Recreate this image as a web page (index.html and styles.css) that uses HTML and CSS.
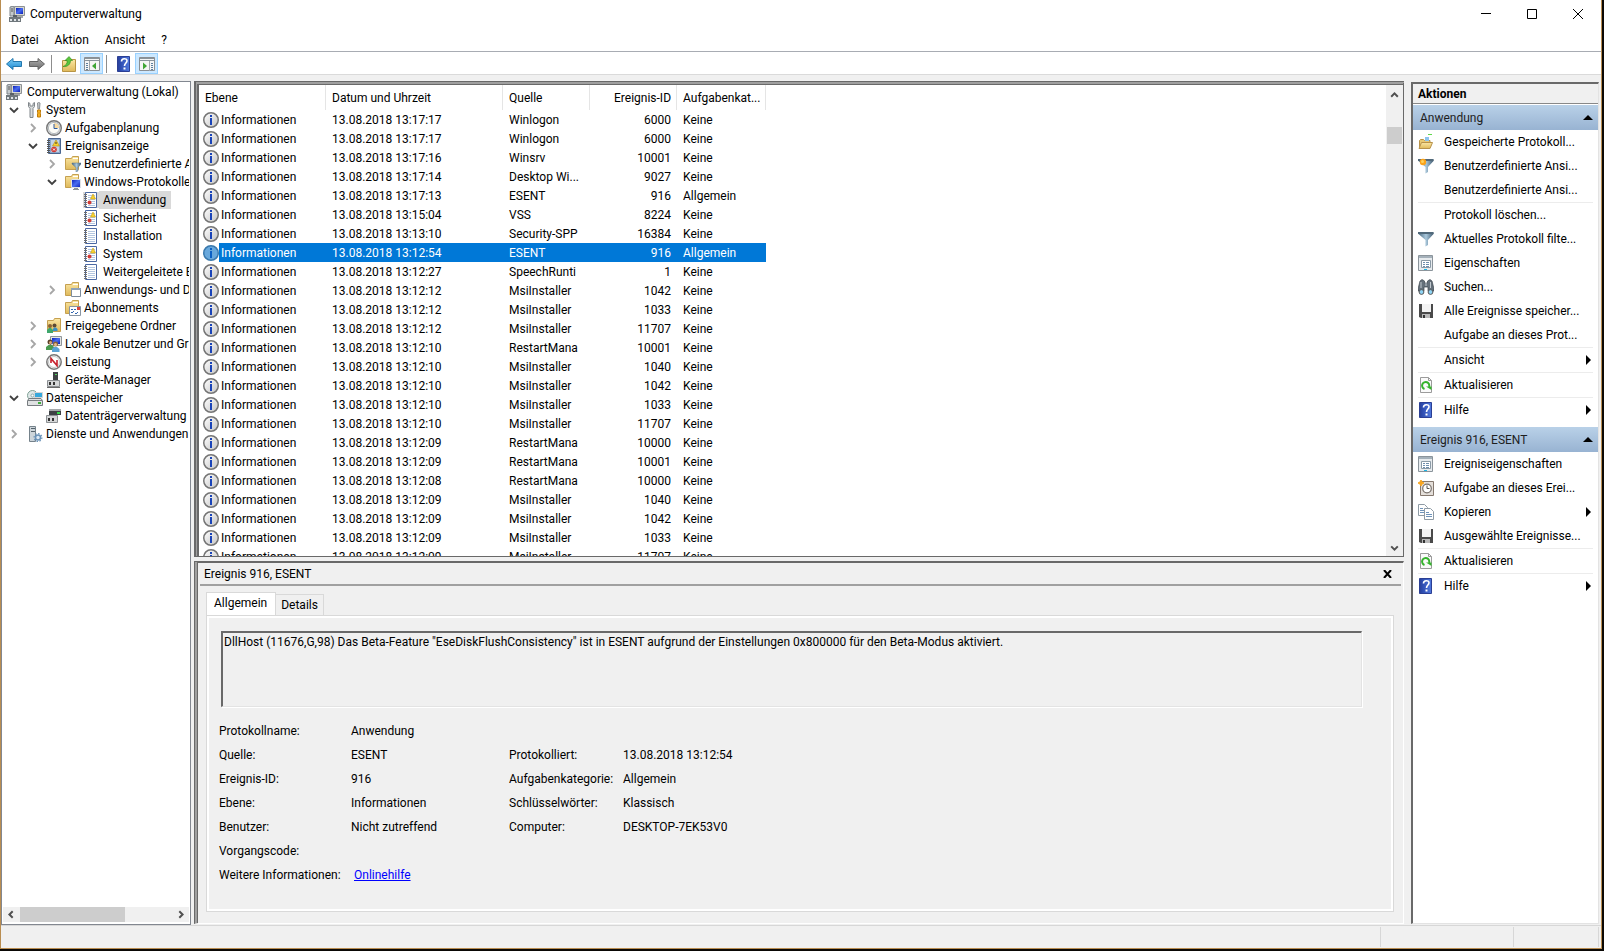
FILE: index.html
```html
<!DOCTYPE html>
<html lang="de">
	<head>
		<title>Computerverwaltung</title>
		<meta charset="UTF-8" />
		<link rel="stylesheet" href="styles.css">
	</head>
	<body>
		<!-- Icon set -->
		<svg class="icon-defs" width="0" height="0">
			<defs>
				<linearGradient id="gBlue" x1="0" y1="0" x2="0" y2="1"><stop offset="0" stop-color="#7fd0f7"/><stop offset="1" stop-color="#1a86d0"/></linearGradient>
				<linearGradient id="gGrey" x1="0" y1="0" x2="0" y2="1"><stop offset="0" stop-color="#b0b0b0"/><stop offset="1" stop-color="#6c6c6c"/></linearGradient>
				<linearGradient id="gFolder" x1="0" y1="0" x2="0" y2="1"><stop offset="0" stop-color="#fbe7a4"/><stop offset="1" stop-color="#dfb95a"/></linearGradient>
				<linearGradient id="gScreen" x1="0" y1="0" x2="1" y2="1"><stop offset="0" stop-color="#0a1fb8"/><stop offset="0.5" stop-color="#4a6df0"/><stop offset="1" stop-color="#0a1fb8"/></linearGradient>
				<linearGradient id="gHelp" x1="0" y1="0" x2="1" y2="0"><stop offset="0" stop-color="#2b3f94"/><stop offset="0.2" stop-color="#2b49ad"/><stop offset="1" stop-color="#5179de"/></linearGradient>
				<linearGradient id="gInfo" x1="0" y1="0" x2="1" y2="1"><stop offset="0" stop-color="#ffffff"/><stop offset="1" stop-color="#c4c4c4"/></linearGradient>
				<linearGradient id="gFunnel" x1="0" y1="0" x2="1" y2="0"><stop offset="0" stop-color="#4c6a80"/><stop offset="0.5" stop-color="#a9c8dc"/><stop offset="1" stop-color="#3f5a70"/></linearGradient>
				<symbol id="computer" viewBox="0 0 16 16">
					<path d="M1 1l4-1v10H1z" fill="#c5cacd" stroke="#7b8288"/>
					<path d="M2 3h2M2 5h2" stroke="#555"/>
					<path d="M5.500.5h10v9h-10z" fill="#d8d8d2" stroke="#8d9194"/>
					<path d="M7 2h7v6H7z" fill="url(#gScreen)"/>
					<path d="M7 10h7v2H7z" fill="#a4a7a9"/>
					<path d="M4 9h4v2H4z" fill="#596066"/>
					<path d="M0 11h12v5H0z" fill="#6f777c"/>
					<path d="M1 13h2v2H1zM5 13h2v2H5zM9 13h2v2H9z" fill="#dfe3e6"/>
				</symbol>
				<symbol id="back" viewBox="0 0 16 16"><path d="M.5 8L7 2.500V5.500h8.500v5H7v3z" fill="url(#gBlue)" stroke="#2277ad"/></symbol>
				<symbol id="forward" viewBox="0 0 16 16"><path d="M15.500 8L9 2.500V5.500H.5v5H9v3z" fill="url(#gGrey)" stroke="#646464"/></symbol>
				<symbol id="folderup" viewBox="0 0 16 16">
					<path d="M1.500 4.500h6l1-1h6v12h-13z" fill="url(#gFolder)" stroke="#b99545"/>
					<path d="M2 10.500c3-1 4.500-3 4-6H4L8 .5l3.500 4H9.500c0 4-3 6.500-7.500 6z" fill="#5ac53c" stroke="#2e8a1c" stroke-width=".6"/>
				</symbol>
				<symbol id="paneleft" viewBox="0 0 16 16">
					<path d="M.5 1.500h15v13H.5z" fill="#f5f5f5" stroke="#8a8f94"/>
					<path d="M1 2h14v1H1zM1 4h14v1H1z" fill="#8a949c"/>
					<path d="M5.500 5v10" stroke="#a0a5aa"/>
					<path d="M2 7.500h2M2 9.500h2M2 11.500h2M2 13.500h2" stroke="#5d7f9e"/>
					<path d="M12 6.500v7L8 10z" fill="#3fa535"/>
				</symbol>
				<symbol id="paneright" viewBox="0 0 16 16">
					<path d="M.5 1.500h15v13H.5z" fill="#f5f5f5" stroke="#8a8f94"/>
					<path d="M1 2h14v1H1zM1 4h14v1H1z" fill="#8a949c"/>
					<path d="M10.500 5v10" stroke="#a0a5aa"/>
					<path d="M12 7.500h2M12 9.500h2M12 11.500h2M12 13.500h2" stroke="#5d7f9e"/>
					<path d="M4 6.500v7L8 10z" fill="#3fa535"/>
				</symbol>
				<symbol id="help" viewBox="0 0 16 16">
					<path d="M1.500.5h12v15h-12z" fill="url(#gHelp)" stroke="#2b3f94"/>
					<path d="M5.500 5.500c0-3.500 5.500-3.500 5.500-.8C11 7 8.500 7 8.500 10" fill="none" stroke="#fff" stroke-width="1.600"/>
					<path d="M7.500 11.500h2v2h-2z" fill="#fff"/>
				</symbol>
				<symbol id="tools" viewBox="0 0 16 16">
					<path d="M1.500.5v4l1.500 2v9h3v-9l1.500-2v-4L6 1.500V4H3V1.500z" fill="#d9dcdd" stroke="#80868a"/>
					<path d="M10.500 1l1-.5 1.500.5-.5 6h-1.500z" fill="#c9ccce" stroke="#8a8f92"/>
					<path d="M10.500 8h3v2l-.5 1 .5 1v3h-3v-3l.5-1-.5-1z" fill="#f5b021" stroke="#c07c08"/>
				</symbol>
				<symbol id="clock" viewBox="0 0 16 16">
					<circle cx="8" cy="8" r="7.300" fill="#dfe3e6" stroke="#777" stroke-width="1.400"/>
					<circle cx="8" cy="8" r="5.600" fill="#fbfbf6" stroke="#b5babd"/>
					<path d="M8 8V3a5 5 0 0 1 5 5z" fill="#f6d9a0"/>
					<path d="M8 4v4.500h3.500" fill="none" stroke="#2c5aa0"/>
				</symbol>
				<symbol id="eventlog" viewBox="0 0 16 16">
					<path d="M2.500.5h12v15h-12z" fill="#8ba7c9" stroke="#4a6690"/>
					<path d="M5 2h8v12H5z" fill="#c3d3e6"/>
					<path d="M1 2.500h3M1 4.500h3M1 6.500h3M1 8.500h3M1 10.500h3M1 12.500h3M1 14.500h3" stroke="#555"/>
					<path d="M10 2l3.500 6h-7z" fill="#f8d230" stroke="#b08c10" stroke-width=".6"/>
					<path d="M9.500 4h1v2h-1z" fill="#333"/>
					<circle cx="8" cy="11.500" r="2.800" fill="#d23a34"/><path d="M7 10.500l2 2M9 10.500l-2 2" stroke="#fff"/>
				</symbol>
				<symbol id="folder" viewBox="0 0 16 16">
					<path d="M.5 2.500h6l1-2h6v13H.5z" fill="url(#gFolder)" stroke="#c5a050"/>
					<path d="M8 2h5v1H8z" fill="#fff"/>
				</symbol>
				<symbol id="folderfilter" viewBox="0 0 16 16">
					<use href="#folder"/>
					<path d="M7 7h9v1l-3 3.500V15l-2 1v-4.500L7 8z" fill="url(#gFunnel)" stroke="#5c7788" stroke-width=".5"/>
				</symbol>
				<symbol id="folderpc" viewBox="0 0 16 16">
					<use href="#folder"/>
					<path d="M6.500 5.500h9v8h-9z" fill="url(#gScreen)" stroke="#dfe3e6"/>
					<path d="M9 14h4v1h1v1H8v-1h1z" fill="#8d9499"/>
				</symbol>
				<symbol id="folderwin" viewBox="0 0 16 16">
					<use href="#folder"/>
					<path d="M6.500 6.500h9v8h-9z" fill="#fff" stroke="#7d8c9c"/>
					<path d="M6 6h10v2H6z" fill="#8fa3b8"/>
				</symbol>
				<symbol id="folderabo" viewBox="0 0 16 16">
					<use href="#folder"/>
					<path d="M4.500 6.500h11v9h-11z" fill="#fff" stroke="#8895a3"/>
					<path d="M6 12l1 1 2-2M10 13l1 1 2-2M6 9.500h2M9 9.500h2" fill="none" stroke="#3468b0"/>
					<path d="M12 7h3v3h-3z" fill="#d9443c"/>
				</symbol>
				<symbol id="log" viewBox="0 0 16 16">
					<path d="M2.500.5h11v15h-11z" fill="#fff" stroke="#4b68a3"/>
					<path d="M5 3.500h7M5 5.500h7M5 7.500h7M5 9.500h7M5 11.500h7M5 13.500h7" stroke="#b3c6e0"/>
					<path d="M1 2.500h3M1 4.500h3M1 6.500h3M1 8.500h3M1 10.500h3M1 12.500h3M1 14.500h3" stroke="#6e6e6e"/>
				</symbol>
				<symbol id="logwarn" viewBox="0 0 16 16">
					<use href="#log"/>
					<path d="M10 2l2.500 5h-5z" fill="#f8d230" stroke="#c79d12" stroke-width=".6"/>
					<circle cx="6.500" cy="10.500" r="2" fill="#d23a34"/>
				</symbol>
				<symbol id="shared" viewBox="0 0 16 16">
					<path d="M1.500 2.500h6l1-2h6v13h-13z" fill="url(#gFolder)" stroke="#c5a050"/>
					<circle cx="4" cy="8" r="2" fill="#8a6234"/><circle cx="8.500" cy="7.500" r="2" fill="#5c4a35"/>
					<path d="M7 13v-2l1-1.500h2l1.500 1.500v2z" fill="#3c8fc4"/><path d="M1 15v-3l2-2h2l2 2v3z" fill="#3fa76c"/>
				</symbol>
				<symbol id="users" viewBox="0 0 16 16">
					<path d="M4.500.5h11v9h-11z" fill="#e2e4e4" stroke="#8f9598"/><path d="M6 2h8v6H6z" fill="url(#gScreen)"/>
					<circle cx="4" cy="6" r="2.500" fill="#5c4028"/><circle cx="4.500" cy="6.500" r="1.500" fill="#d9a878"/>
					<path d="M0 14v-3l2.500-2H6l2 2v3z" fill="#4a9a50"/>
					<circle cx="9.500" cy="8" r="2.500" fill="#8a6234"/><circle cx="9.500" cy="8.500" r="1.500" fill="#e5bb90"/>
					<path d="M6 16v-3l2-2h3l2.500 2v3z" fill="#5aa3d6"/>
				</symbol>
				<symbol id="perf" viewBox="0 0 16 16">
					<circle cx="8" cy="8" r="7.200" fill="#fff" stroke="#777" stroke-width="1.500"/>
					<circle cx="8" cy="8" r="5.500" fill="#fff" stroke="#c8c8c8"/>
					<path d="M5 9V4.500L11 11.500V6" fill="none" stroke="#c8202c" stroke-width="1.600"/>
				</symbol>
				<symbol id="device" viewBox="0 0 16 16">
					<path d="M7 0h5v8H7z" fill="#3e4143"/><path d="M9 2h2v1H9z" fill="#4fd05a"/>
					<path d="M1.500 8.500h12v6h-12z" fill="#d5d7d8" stroke="#8b8f92"/>
					<path d="M3 10h2v3H3zM7 10h2v3H7z" fill="#333"/><path d="M1 15h13v1H1z" fill="#6a6a6a"/>
				</symbol>
				<symbol id="storage" viewBox="0 0 16 16">
					<circle cx="5.500" cy="5.500" r="5" fill="#dfe8e8" stroke="#7fa095"/><circle cx="5.500" cy="5.500" r="1.500" fill="#fff" stroke="#8aa"/>
					<path d="M7.500 2.500h8v5h-8z" fill="#37a8dc" stroke="#d5d5d5"/>
					<path d="M2 8.500h12l1.500 2v5H.5v-5z" fill="#dfe1e2" stroke="#777c80"/><path d="M1 10.500h14" stroke="#777c80"/><path d="M11 12h3v2h-3z" fill="#3fae3c"/>
				</symbol>
				<symbol id="disk" viewBox="0 0 16 16">
					<path d="M3 1h12v6H3z" fill="#3c4043"/><path d="M3 1h12v2H3z" fill="#a4a8aa"/><path d="M11 4h3v2h-3z" fill="#33d84a"/>
					<path d="M.5 7.500h11v7H.5z" fill="#d5d7d8" stroke="#8b8f92"/><path d="M2 10h2v3H2zM6 10h2v3H6z" fill="#333"/>
				</symbol>
				<symbol id="services" viewBox="0 0 16 16">
					<path d="M2.500.5h6v15h-6z" fill="#cdd5da" stroke="#75828b"/><path d="M4 2.500h4M4 5.500h4" stroke="#55636c"/>
					<circle cx="11" cy="11.500" r="2.500" fill="#dce9f4" stroke="#6b93b8" stroke-width="1.500"/>
					<circle cx="11" cy="11.500" r="3.900" fill="none" stroke="#6b93b8" stroke-width="1.200" stroke-dasharray="1.500 1.500"/>
				</symbol>
				<symbol id="info" viewBox="0 0 16 16">
					<circle cx="8" cy="8" r="7.250" fill="url(#gInfo)" stroke="#757575" stroke-width="1.500"/>
					<path d="M7 3h2v2H7zM7 6h2v7H7z" fill="#1a44b8"/>
				</symbol>
				<symbol id="infosel" viewBox="0 0 16 16">
					<circle cx="8" cy="8" r="7.250" fill="#68a8dc" stroke="#3a79ad" stroke-width="1.500"/>
					<path d="M7 3h2v2H7zM7 6h2v7H7z" fill="#0a5fc4"/>
				</symbol>
				<symbol id="open" viewBox="0 0 16 16">
					<path d="M10 .5h4" stroke="#5fd84c"/>
					<path d="M1.500 13V6.500l1-1h3l1 1H12V8" fill="#e8c873" stroke="#b8924a"/>
					<path d="M7 3h4v4H7z" fill="#8cc4ee"/>
					<path d="M3.500 8.500h11L12 14.500H1z" fill="url(#gFolder)" stroke="#b8924a"/>
				</symbol>
				<symbol id="funnel" viewBox="0 0 16 16">
					<path d="M.5 1.500h15v1.500L10 9v5l-2.500 1.500V9L.5 3z" fill="url(#gFunnel)"/><path d="M0 2h15.500" stroke="#51697a" stroke-width="2"/>
				</symbol>
				<symbol id="funnelnew" viewBox="0 0 16 16">
					<use href="#funnel"/><circle cx="5" cy="4" r="3.200" fill="#fba31a"/><circle cx="4.500" cy="3.500" r="1.500" fill="#ffd25a"/>
				</symbol>
				<symbol id="props" viewBox="0 0 16 16">
					<path d="M.5.5h14v15H.5z" fill="#e7ebee" stroke="#8b949b"/><path d="M1 1h13v2H1z" fill="#a5b1ba"/>
					<path d="M3.500 5.500h9v7h-9z" fill="#fff" stroke="#8b9aa6"/><path d="M5 7.500h2M8 7.500h3M5 9.500h2M8 9.500h3M5 11.500h2M8 11.500h3" stroke="#6f8fae"/>
					<path d="M6 14.500h3" stroke="#19b5e6"/>
				</symbol>
				<symbol id="binoc" viewBox="0 0 16 16">
					<path d="M2 2l2-1.500L6.500 2v2h3V2L12 .5 14 2l2 8v2h-6V8H6v4H0v-2z" fill="#65707a" stroke="#3e464d" stroke-width=".7"/>
					<path d="M3 3v6M12.500 3v6M8 4v3" stroke="#c1c9cf"/>
					<circle cx="3.500" cy="13" r="2.400" fill="#8fd4f4" stroke="#555"/><circle cx="12.500" cy="13" r="2.400" fill="#8fd4f4" stroke="#555"/>
				</symbol>
				<symbol id="save" viewBox="0 0 16 16">
					<path d="M1 1h14v14H3l-2-1z" fill="#4a4a4a"/><path d="M4 1h9v8H4z" fill="#f3f3f3"/>
					<path d="M4 11h8v4H4z" fill="#b9b9b9"/><path d="M5 12h2v3H5z" fill="#333"/>
				</symbol>
				<symbol id="refresh" viewBox="0 0 16 16">
					<path d="M2.500.5h8l3 3v12h-11z" fill="#fafafa" stroke="#9b9b9b"/><path d="M10.500.5v3h3" fill="none" stroke="#9b9b9b"/>
					<path d="M6.500 12A3.600 3.600 0 1 1 11 10" fill="none" stroke="#35b32c" stroke-width="2"/><path d="M8 9.500h5.500V13z" fill="#35b32c"/>
				</symbol>
				<symbol id="task" viewBox="0 0 16 16">
					<path d="M2.500 1.500h13v14h-13z" fill="#e4dfda" stroke="#85786f"/>
					<circle cx="9" cy="8.500" r="4.300" fill="#fff" stroke="#78716c" stroke-width="1.200"/><path d="M9 5.500v3h2.500" fill="none" stroke="#555"/>
					<path d="M3 0l1 2 2 1-2 1-1 2-1-2-2-1 2-1z" fill="#f9a51e" stroke="#f9a51e"/>
				</symbol>
				<symbol id="copy" viewBox="0 0 16 16">
					<path d="M.5.5h6l3 3v8h-9z" fill="#fff" stroke="#8f9ba5"/><path d="M2 4.500h3M2 6.500h4M2 8.500h4" stroke="#6f93ba"/>
					<path d="M6.500 4.500h6l3 3v8h-9z" fill="#fff" stroke="#8f9ba5"/><path d="M8 8.500h3M8 10.500h6M8 12.500h6" stroke="#6f93ba"/>
				</symbol>
				<symbol id="chevron" viewBox="0 0 10 10"><path d="M3 1l4 4-4 4" fill="none" stroke="#a6a6a6" stroke-width="1.800"/></symbol>
				<symbol id="chevrondown" viewBox="0 0 10 10"><path d="M1 3l4 4 4-4" fill="none" stroke="#404040" stroke-width="1.800"/></symbol>
				<symbol id="sbup" viewBox="0 0 10 10"><path d="M2 7l3-3 3 3" fill="none" stroke="#505050" stroke-width="1.800"/></symbol>
				<symbol id="sbdown" viewBox="0 0 10 10"><path d="M2 4l3 3 3-3" fill="none" stroke="#505050" stroke-width="1.800"/></symbol>
				<symbol id="sbleft" viewBox="0 0 10 10"><path d="M7 2L4 5l3 3" fill="none" stroke="#505050" stroke-width="1.800"/></symbol>
				<symbol id="sbright" viewBox="0 0 10 10"><path d="M3 2l3 3-3 3" fill="none" stroke="#505050" stroke-width="1.800"/></symbol>
				<symbol id="triup" viewBox="0 0 10 10"><path d="M0 7h10L5 2z"/></symbol>
				<symbol id="triright" viewBox="0 0 10 10"><path d="M3 0v10l5-5z"/></symbol>
			</defs>
		</svg>

		<div class="window">
			<!-- Title bar -->
			<div class="titlebar">
				<svg class="icon"><use href="#computer"/></svg>
				<span class="title">Computerverwaltung</span>
				<button class="win-button" aria-label="Minimieren"><svg width="10" height="11"><path d="M0 5.500h10" stroke="#000"/></svg></button>
				<button class="win-button" aria-label="Maximieren"><svg width="10" height="10"><path d="M.5.5h9v9h-9z" fill="none" stroke="#000"/></svg></button>
				<button class="win-button" aria-label="Schließen"><svg width="10" height="10"><path d="M0 0l10 10M10 0L0 10" stroke="#000"/></svg></button>
			</div>

			<!-- Menu -->
			<div class="menubar">
				<button>Datei</button>
				<button>Aktion</button>
				<button>Ansicht</button>
				<button>?</button>
			</div>

			<!-- Toolbar -->
			<div class="toolbar">
				<button aria-label="Zurück"><svg class="icon"><use href="#back"/></svg></button>
				<button aria-label="Vorwärts"><svg class="icon"><use href="#forward"/></svg></button>
				<div class="tool-separator"></div>
				<button aria-label="Nach oben"><svg class="icon"><use href="#folderup"/></svg></button>
				<button class="pressed" aria-label="Konsolenstruktur"><svg class="icon"><use href="#paneleft"/></svg></button>
				<div class="tool-separator"></div>
				<button aria-label="Hilfe"><svg class="icon"><use href="#help"/></svg></button>
				<button class="pressed" aria-label="Aktionsbereich"><svg class="icon"><use href="#paneright"/></svg></button>
			</div>

			<div class="main">
				<!-- Console tree -->
				<div class="tree-pane">
					<ul class="tree">
						<li class="level0"><svg class="icon"><use href="#computer"/></svg><span>Computerverwaltung (Lokal)</span></li>
						<li class="level1"><svg class="arrow"><use href="#chevrondown"/></svg><svg class="icon"><use href="#tools"/></svg><span>System</span></li>
						<li class="level2"><svg class="arrow"><use href="#chevron"/></svg><svg class="icon"><use href="#clock"/></svg><span>Aufgabenplanung</span></li>
						<li class="level2"><svg class="arrow"><use href="#chevrondown"/></svg><svg class="icon"><use href="#eventlog"/></svg><span>Ereignisanzeige</span></li>
						<li class="level3"><svg class="arrow"><use href="#chevron"/></svg><svg class="icon"><use href="#folderfilter"/></svg><span>Benutzerdefinierte Ansichten</span></li>
						<li class="level3"><svg class="arrow"><use href="#chevrondown"/></svg><svg class="icon"><use href="#folderpc"/></svg><span>Windows-Protokolle</span></li>
						<li class="level4 selected"><svg class="icon"><use href="#logwarn"/></svg><span>Anwendung</span></li>
						<li class="level4"><svg class="icon"><use href="#logwarn"/></svg><span>Sicherheit</span></li>
						<li class="level4"><svg class="icon"><use href="#log"/></svg><span>Installation</span></li>
						<li class="level4"><svg class="icon"><use href="#logwarn"/></svg><span>System</span></li>
						<li class="level4"><svg class="icon"><use href="#log"/></svg><span>Weitergeleitete Ereignisse</span></li>
						<li class="level3"><svg class="arrow"><use href="#chevron"/></svg><svg class="icon"><use href="#folderwin"/></svg><span>Anwendungs- und Dienstprotokolle</span></li>
						<li class="level3"><svg class="arrow"></svg><svg class="icon"><use href="#folderabo"/></svg><span>Abonnements</span></li>
						<li class="level2"><svg class="arrow"><use href="#chevron"/></svg><svg class="icon"><use href="#shared"/></svg><span>Freigegebene Ordner</span></li>
						<li class="level2"><svg class="arrow"><use href="#chevron"/></svg><svg class="icon"><use href="#users"/></svg><span>Lokale Benutzer und Gruppen</span></li>
						<li class="level2"><svg class="arrow"><use href="#chevron"/></svg><svg class="icon"><use href="#perf"/></svg><span>Leistung</span></li>
						<li class="level2"><svg class="arrow"></svg><svg class="icon"><use href="#device"/></svg><span>Geräte-Manager</span></li>
						<li class="level1"><svg class="arrow"><use href="#chevrondown"/></svg><svg class="icon"><use href="#storage"/></svg><span>Datenspeicher</span></li>
						<li class="level2"><svg class="arrow"></svg><svg class="icon"><use href="#disk"/></svg><span>Datenträgerverwaltung</span></li>
						<li class="level1"><svg class="arrow"><use href="#chevron"/></svg><svg class="icon"><use href="#services"/></svg><span>Dienste und Anwendungen</span></li>
					</ul>
					<div class="hscroll">
						<svg class="sb-arrow"><use href="#sbleft"/></svg>
						<div class="hscroll-track"><div class="hscroll-thumb"></div></div>
						<svg class="sb-arrow"><use href="#sbright"/></svg>
					</div>
				</div>

				<div class="center-pane">
					<!-- Event list -->
					<div class="list-pane">
						<div class="list-scroll">
							<table class="events">
								<colgroup><col class="c-icon"><col class="c-level"><col class="c-date"><col class="c-source"><col class="c-id"><col class="c-cat"></colgroup>
								<thead>
									<tr><th colspan="2">Ebene</th><th>Datum und Uhrzeit</th><th>Quelle</th><th class="num">Ereignis-ID</th><th>Aufgabenkat...</th></tr>
								</thead>
								<tbody>
									<tr><td><svg class="icon"><use href="#info"/></svg></td><td>Informationen</td><td>13.08.2018 13:17:17</td><td>Winlogon</td><td>6000</td><td>Keine</td></tr>
									<tr><td><svg class="icon"><use href="#info"/></svg></td><td>Informationen</td><td>13.08.2018 13:17:17</td><td>Winlogon</td><td>6000</td><td>Keine</td></tr>
									<tr><td><svg class="icon"><use href="#info"/></svg></td><td>Informationen</td><td>13.08.2018 13:17:16</td><td>Winsrv</td><td>10001</td><td>Keine</td></tr>
									<tr><td><svg class="icon"><use href="#info"/></svg></td><td>Informationen</td><td>13.08.2018 13:17:14</td><td>Desktop Wi...</td><td>9027</td><td>Keine</td></tr>
									<tr><td><svg class="icon"><use href="#info"/></svg></td><td>Informationen</td><td>13.08.2018 13:17:13</td><td>ESENT</td><td>916</td><td>Allgemein</td></tr>
									<tr><td><svg class="icon"><use href="#info"/></svg></td><td>Informationen</td><td>13.08.2018 13:15:04</td><td>VSS</td><td>8224</td><td>Keine</td></tr>
									<tr><td><svg class="icon"><use href="#info"/></svg></td><td>Informationen</td><td>13.08.2018 13:13:10</td><td>Security-SPP</td><td>16384</td><td>Keine</td></tr>
									<tr class="selected"><td><svg class="icon"><use href="#infosel"/></svg></td><td>Informationen</td><td>13.08.2018 13:12:54</td><td>ESENT</td><td>916</td><td>Allgemein</td></tr>
									<tr><td><svg class="icon"><use href="#info"/></svg></td><td>Informationen</td><td>13.08.2018 13:12:27</td><td>SpeechRunti</td><td>1</td><td>Keine</td></tr>
									<tr><td><svg class="icon"><use href="#info"/></svg></td><td>Informationen</td><td>13.08.2018 13:12:12</td><td>MsiInstaller</td><td>1042</td><td>Keine</td></tr>
									<tr><td><svg class="icon"><use href="#info"/></svg></td><td>Informationen</td><td>13.08.2018 13:12:12</td><td>MsiInstaller</td><td>1033</td><td>Keine</td></tr>
									<tr><td><svg class="icon"><use href="#info"/></svg></td><td>Informationen</td><td>13.08.2018 13:12:12</td><td>MsiInstaller</td><td>11707</td><td>Keine</td></tr>
									<tr><td><svg class="icon"><use href="#info"/></svg></td><td>Informationen</td><td>13.08.2018 13:12:10</td><td>RestartMana</td><td>10001</td><td>Keine</td></tr>
									<tr><td><svg class="icon"><use href="#info"/></svg></td><td>Informationen</td><td>13.08.2018 13:12:10</td><td>MsiInstaller</td><td>1040</td><td>Keine</td></tr>
									<tr><td><svg class="icon"><use href="#info"/></svg></td><td>Informationen</td><td>13.08.2018 13:12:10</td><td>MsiInstaller</td><td>1042</td><td>Keine</td></tr>
									<tr><td><svg class="icon"><use href="#info"/></svg></td><td>Informationen</td><td>13.08.2018 13:12:10</td><td>MsiInstaller</td><td>1033</td><td>Keine</td></tr>
									<tr><td><svg class="icon"><use href="#info"/></svg></td><td>Informationen</td><td>13.08.2018 13:12:10</td><td>MsiInstaller</td><td>11707</td><td>Keine</td></tr>
									<tr><td><svg class="icon"><use href="#info"/></svg></td><td>Informationen</td><td>13.08.2018 13:12:09</td><td>RestartMana</td><td>10000</td><td>Keine</td></tr>
									<tr><td><svg class="icon"><use href="#info"/></svg></td><td>Informationen</td><td>13.08.2018 13:12:09</td><td>RestartMana</td><td>10001</td><td>Keine</td></tr>
									<tr><td><svg class="icon"><use href="#info"/></svg></td><td>Informationen</td><td>13.08.2018 13:12:08</td><td>RestartMana</td><td>10000</td><td>Keine</td></tr>
									<tr><td><svg class="icon"><use href="#info"/></svg></td><td>Informationen</td><td>13.08.2018 13:12:09</td><td>MsiInstaller</td><td>1040</td><td>Keine</td></tr>
									<tr><td><svg class="icon"><use href="#info"/></svg></td><td>Informationen</td><td>13.08.2018 13:12:09</td><td>MsiInstaller</td><td>1042</td><td>Keine</td></tr>
									<tr><td><svg class="icon"><use href="#info"/></svg></td><td>Informationen</td><td>13.08.2018 13:12:09</td><td>MsiInstaller</td><td>1033</td><td>Keine</td></tr>
									<tr><td><svg class="icon"><use href="#info"/></svg></td><td>Informationen</td><td>13.08.2018 13:12:09</td><td>MsiInstaller</td><td>11707</td><td>Keine</td></tr>
								</tbody>
							</table>
						</div>
						<div class="vscroll">
							<svg class="sb-arrow"><use href="#sbup"/></svg>
							<div class="vscroll-track"><div class="vscroll-thumb"></div></div>
							<svg class="sb-arrow"><use href="#sbdown"/></svg>
						</div>
					</div>

					<!-- Event preview -->
					<div class="preview-pane">
						<div class="preview-head">
							<span>Ereignis 916, ESENT</span>
							<button aria-label="Vorschau schließen"><svg width="9" height="8"><path d="M1 0l7 8M8 0L1 8" stroke="#000" stroke-width="2"/></svg></button>
						</div>
						<div class="tabs">
							<button class="tab active">Allgemein</button>
							<button class="tab">Details</button>
						</div>
						<div class="tab-page">
							<textarea class="message" aria-label="Beschreibung" readonly>DllHost (11676,G,98) Das Beta-Feature "EseDiskFlushConsistency" ist in ESENT aufgrund der Einstellungen 0x800000 für den Beta-Modus aktiviert.</textarea>
							<div class="fields">
								<span>Protokollname:</span><span class="wide">Anwendung</span>
								<span>Quelle:</span><span>ESENT</span><span>Protokolliert:</span><span>13.08.2018 13:12:54</span>
								<span>Ereignis-ID:</span><span>916</span><span>Aufgabenkategorie:</span><span>Allgemein</span>
								<span>Ebene:</span><span>Informationen</span><span>Schlüsselwörter:</span><span>Klassisch</span>
								<span>Benutzer:</span><span>Nicht zutreffend</span><span>Computer:</span><span>DESKTOP-7EK53V0</span>
								<span>Vorgangscode:</span><span class="wide"></span>
								<span>Weitere Informationen:</span><span class="wide"><a href="#">Onlinehilfe</a></span>
							</div>
						</div>
					</div>
				</div>

				<!-- Actions -->
				<div class="actions-pane">
					<h2>Aktionen</h2>
					<button class="group">Anwendung<svg class="mark"><use href="#triup"/></svg></button>
					<button class="action"><svg class="icon"><use href="#open"/></svg><span>Gespeicherte Protokoll...</span></button>
					<button class="action"><svg class="icon"><use href="#funnelnew"/></svg><span>Benutzerdefinierte Ansi...</span></button>
					<button class="action"><svg class="icon"></svg><span>Benutzerdefinierte Ansi...</span></button>
					<hr>
					<button class="action"><svg class="icon"></svg><span>Protokoll löschen...</span></button>
					<button class="action"><svg class="icon"><use href="#funnel"/></svg><span>Aktuelles Protokoll filte...</span></button>
					<button class="action"><svg class="icon"><use href="#props"/></svg><span>Eigenschaften</span></button>
					<button class="action"><svg class="icon"><use href="#binoc"/></svg><span>Suchen...</span></button>
					<button class="action"><svg class="icon"><use href="#save"/></svg><span>Alle Ereignisse speicher...</span></button>
					<button class="action"><svg class="icon"></svg><span>Aufgabe an dieses Prot...</span></button>
					<hr>
					<button class="action"><svg class="icon"></svg><span>Ansicht</span><svg class="mark"><use href="#triright"/></svg></button>
					<hr>
					<button class="action"><svg class="icon"><use href="#refresh"/></svg><span>Aktualisieren</span></button>
					<hr>
					<button class="action"><svg class="icon"><use href="#help"/></svg><span>Hilfe</span><svg class="mark"><use href="#triright"/></svg></button>
					<button class="group second">Ereignis 916, ESENT<svg class="mark"><use href="#triup"/></svg></button>
					<button class="action"><svg class="icon"><use href="#props"/></svg><span>Ereigniseigenschaften</span></button>
					<button class="action"><svg class="icon"><use href="#task"/></svg><span>Aufgabe an dieses Erei...</span></button>
					<button class="action"><svg class="icon"><use href="#copy"/></svg><span>Kopieren</span><svg class="mark"><use href="#triright"/></svg></button>
					<button class="action"><svg class="icon"><use href="#save"/></svg><span>Ausgewählte Ereignisse...</span></button>
					<hr>
					<button class="action"><svg class="icon"><use href="#refresh"/></svg><span>Aktualisieren</span></button>
					<hr>
					<button class="action"><svg class="icon"><use href="#help"/></svg><span>Hilfe</span><svg class="mark"><use href="#triright"/></svg></button>
				</div>
			</div>

			<!-- Status bar -->
			<div class="statusbar">
				<div class="status-text"></div>
				<div class="status-mid"></div>
				<div class="status-end"></div>
			</div>
		</div>
	</body>
</html>
```
FILE: styles.css
```css
* {
	box-sizing: border-box;
}

body {
	margin: 0;
	height: 100vh;
	padding: 0 2px 2px 0;
	background: #0a0805;
	font-family: Roboto, "Open Sans", sans-serif;
	font-size: 12px;
	line-height: 18px;
	color: #000;
	overflow: hidden;
}

button {
	font: inherit;
	color: inherit;
	border: 0;
	padding: 0;
	background: none;
}

.icon-defs {
	position: absolute;
}

.icon {
	width: 16px;
	height: 16px;
	flex: none;
	display: block;
}

.window {
	height: 100%;
	display: flex;
	flex-direction: column;
	background: #f0f0f0;
	border: 1px solid #b98d51;
	border-top: 0;
}

/* title bar */
.titlebar {
	display: flex;
	align-items: center;
	height: 27px;
	padding-left: 8px;
	background: #fff;
}
.title {
	flex: 1;
	padding-left: 5px;
}
.win-button {
	width: 46px;
	height: 27px;
	display: flex;
	align-items: center;
	justify-content: center;
}

/* menu and toolbar */
.menubar {
	display: flex;
	gap: 16px;
	height: 25px;
	padding: 1px 10px 0;
	background: #fff;
	border-bottom: 1px solid #a8acb3;
}
.toolbar {
	display: flex;
	align-items: center;
	height: 23px;
	padding: 1px 0 0 1px;
	background: #fff;
	border-bottom: 1px solid #dadada;
}
.toolbar button {
	width: 23px;
	height: 21px;
	display: flex;
	align-items: center;
	justify-content: center;
}
.toolbar .pressed {
	background: #cce8ff;
	border: 1px solid #99d1ff;
}
.tool-separator {
	width: 1px;
	height: 18px;
	margin: 0 5px 0 3px;
	background: #8d8d8d;
}

/* three panes */
.main {
	flex: 1;
	min-height: 0;
	display: flex;
	padding-top: 6px;
}

/* console tree */
.tree-pane {
	width: 190px;
	flex: none;
	display: flex;
	flex-direction: column;
	padding: 1px 1px 2px;
	background: #fff;
	border: 1px solid #828790;
}
.tree {
	flex: 1;
	margin: 0;
	padding: 0;
	list-style: none;
	overflow: hidden;
}
.tree li {
	display: flex;
	align-items: center;
	height: 18px;
	white-space: nowrap;
}
.tree .arrow {
	width: 10px;
	height: 10px;
	flex: none;
	margin-right: 8px;
}
.tree span {
	padding: 0 3px;
}
.level0 { padding-left: 3px; }
.level1 { padding-left: 6px; }
.level2 { padding-left: 25px; }
.level3 { padding-left: 44px; }
.level4 { padding-left: 80px; }
.tree .level0 span { padding-left: 5px; }
.tree .level4 span { padding: 0 5px 0 4px; }
.tree .selected .icon,
.tree .selected span {
	background: #d9d9d9;
}

/* scroll bars */
.sb-arrow {
	width: 15px;
	height: 15px;
	flex: none;
	display: block;
	padding: 2px;
}
.hscroll {
	display: flex;
	background: #f0f0f0;
}
.hscroll-track {
	flex: 1;
	padding: 0 2px;
}
.hscroll-thumb {
	width: 69%;
	height: 15px;
	background: #cdcdcd;
}
.vscroll {
	width: 17px;
	display: flex;
	flex-direction: column;
	padding: 2px 1px 1px;
	background: #f0f0f0;
}
.vscroll-track {
	flex: 1;
	padding-top: 25px;
}
.vscroll-thumb {
	height: 17px;
	background: #cdcdcd;
}

/* center */
.center-pane {
	flex: 1;
	min-width: 0;
	display: flex;
	flex-direction: column;
	margin: 0 2px 0 3px;
}
.list-pane {
	height: 476px;
	flex: none;
	display: flex;
	background: linear-gradient(#fff, #fff) padding-box, #a0a0a0 border-box;
	border: solid #696969;
	border-width: 4px 1px 1px 5px;
	border-top-style: double;
	border-left-style: double;
}
.list-scroll {
	flex: 1;
	overflow: hidden;
}
.events {
	width: 567px;
	table-layout: fixed;
	border-collapse: separate;
	border-spacing: 0;
}
.c-icon { width: 20px; }
.c-level { width: 107px; }
.c-date { width: 177px; }
.c-source { width: 87px; }
.c-id { width: 87px; }
.c-cat { width: 89px; }
.events th {
	height: 25px;
	padding: 0 5px 0 6px;
	font-weight: normal;
	text-align: left;
	border-right: 1px solid #e5e5e5;
	white-space: nowrap;
}
.events td {
	height: 19px;
	padding: 0 6px;
	white-space: nowrap;
}
.events td:nth-child(1) { padding: 0 0 0 4px; }
.events td:nth-child(2) { padding: 0 2px; }
.events .num,
.events td:nth-child(5) {
	text-align: right;
}
.events .selected td + td {
	background: #0078d7;
	color: #fff;
}

/* preview */
.preview-pane {
	flex: 1;
	min-height: 0;
	display: flex;
	flex-direction: column;
	margin: 4px 0 1px;
	padding: 0 9px 11px 8px;
	background: linear-gradient(#f0f0f0, #f0f0f0) padding-box, #a0a0a0 border-box;
	border: solid #696969;
	border-width: 2px 1px 1px 4px;
	border-left-style: double;
	border-right-color: #fff;
	border-bottom-color: #fff;
}
.preview-head {
	display: flex;
	align-items: center;
	justify-content: space-between;
	height: 23px;
	margin: 0 -7px 0 -6px;
	padding: 1px 9px 0 4px;
	border-bottom: 2px solid #a0a0a0;
}
.tabs {
	display: flex;
	align-items: flex-end;
	height: 29px;
}
.tab {
	height: 21px;
	padding: 0 5px;
	border: 1px solid #d9d9d9;
	border-left: 0;
	border-bottom: 0;
}
.tab.active {
	height: 23px;
	padding: 0 8px 2px 7px;
	background: #fff;
	border-left: 1px solid #d9d9d9;
}
.tab-page {
	flex: 1;
	padding: 15px 31px 0 14px;
	border: 1px solid #d9d9d9;
	box-shadow: inset 0 0 0 2px #fff;
}
.message {
	display: block;
	width: 100%;
	height: 76px;
	padding: 0 1px;
	font: inherit;
	background: #f0f0f0;
	border: 2px solid #696969;
	border-right: 1px solid #e3e3e3;
	border-bottom: 1px solid #e3e3e3;
	box-shadow: 1px 1px 0 #fff;
	resize: none;
	outline: none;
}
.fields {
	display: grid;
	grid-template-columns: 132px 158px 114px 1fr;
	grid-auto-rows: 24px;
	align-items: center;
	margin-left: -2px;
	padding-top: 12px;
	white-space: nowrap;
}
.fields .wide {
	grid-column: 2 / 5;
}
.fields a {
	margin-left: 3px;
	color: #0000ff;
}

/* actions */
.actions-pane {
	width: 188px;
	flex: none;
	display: flex;
	flex-direction: column;
	margin: 1px 2px 1px 5px;
	background: #fff;
	border: solid #696969;
	border-width: 2px 1px 1px 2px;
	border-right-color: #e3e3e3;
	border-bottom-color: #e3e3e3;
}
.actions-pane h2 {
	height: 20px;
	margin: 0;
	padding-left: 5px;
	font-size: 12px;
	line-height: 20px;
	background: #f0f0f0;
	border-bottom: 1px solid #888;
}
.actions-pane .group {
	display: flex;
	align-items: center;
	justify-content: space-between;
	height: 25px;
	margin-top: 1px;
	padding: 0 5px 0 7px;
	color: #1e1e1e;
	background: linear-gradient(#b9d1e8, #98b3d2);
}
.actions-pane .second {
	margin-top: 5px;
}
.actions-pane .action {
	display: flex;
	align-items: center;
	gap: 10px;
	height: 24px;
	padding: 0 5px;
	text-align: left;
}
.action span {
	flex: 1;
	white-space: nowrap;
}
.actions-pane hr {
	width: auto;
	height: 1px;
	margin: 0 5px;
	border: 0;
	background: #ececec;
}
.mark {
	width: 10px;
	height: 10px;
	flex: none;
	color: #000;
}

/* status bar */
.statusbar {
	display: flex;
	height: 23px;
	padding: 1px 2px 1px 0;
	border-top: 1px solid #d7d7d7;
}
.statusbar div {
	border-right: 1px solid #d7d7d7;
}
.status-text { flex: 1; }
.status-mid { width: 133px; }
.status-end { width: 85px; }
```
